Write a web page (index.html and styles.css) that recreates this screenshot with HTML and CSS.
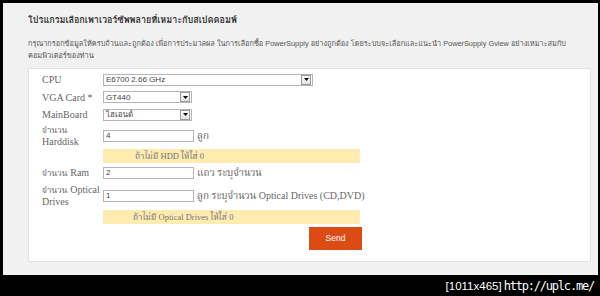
FILE: index.html
```html
<!DOCTYPE html>
<html lang="th">
<head>
<meta charset="utf-8">
<title>PowerSupply</title>
<link rel="stylesheet" href="styles.css">
</head>
<body>
<div class="panel">
  <h1 class="title">โปรแกรมเลือกเพาเวอร์ซัพพลายที่เหมาะกับสเปคคอมพ์</h1>
  <p class="desc">กรุณากรอกข้อมูลให้ครบถ้วนและถูกต้อง เพื่อการประมวลผล ในการเลือกซื้อ PowerSupply อย่างถูกต้อง โดยระบบจะเลือกและแนะนำ PowerSupply Gview อย่างเหมาะสมกับ<br>คอมพิวเตอร์ของท่าน</p>
  <div class="box">
    <div class="row r1">
      <div class="label">CPU</div>
      <div class="select wide"><span class="val">E6700 2.66 GHz</span><span class="arrow"><svg width="5" height="3" viewBox="0 0 5 3"><path d="M0 0H5L2.5 3Z" fill="#000"/></svg></span></div>
    </div>
    <div class="row r1">
      <div class="label">VGA Card *</div>
      <div class="select narrow"><span class="val">GT440</span><span class="arrow"><svg width="5" height="3" viewBox="0 0 5 3"><path d="M0 0H5L2.5 3Z" fill="#000"/></svg></span></div>
    </div>
    <div class="row r1">
      <div class="label">MainBoard</div>
      <div class="select narrow"><span class="val">ไฮเอนด์</span><span class="arrow"><svg width="5" height="3" viewBox="0 0 5 3"><path d="M0 0H5L2.5 3Z" fill="#000"/></svg></span></div>
    </div>
    <div class="row r2">
      <div class="label"><span class="th">จำนวน</span><br>Harddisk</div>
      <div class="input">4</div><span class="unit">ลูก</span>
    </div>
    <div class="note">ถ้าไม่มี HDD ให้ใส่ 0</div>
    <div class="row r3">
      <div class="label"><span class="th">จำนวน</span> Ram</div>
      <div class="input">2</div><span class="unit">แถว ระบุจำนวน</span>
    </div>
    <div class="row r4">
      <div class="label"><span class="th">จำนวน</span> Optical<br>Drives</div>
      <div class="input">1</div><span class="unit">ลูก ระบุจำนวน Optical Drives (CD,DVD)</span>
    </div>
    <div class="note n2">ถ้าไม่มี Optical Drives ให้ใส่ 0</div>
    <div class="actions"><button class="send">Send</button></div>
  </div>
</div>
<div class="footer"><span class="size">[1011x465]</span><span class="url">http://uplc.me/</span></div>
</body>
</html>
```
FILE: styles.css
```css
html, body {
  margin: 0;
  padding: 0;
  background: #000;
  width: 600px;
  height: 296px;
  overflow: hidden;
}
body {
  padding-top: 3px;
  box-sizing: border-box;
}
.panel {
  margin: 0 2px 0 3px;
  height: 272px;
  background: #f1f1f1;
  padding: 0 7px 0 25px;
  box-sizing: border-box;
  overflow: hidden;
}
.title {
  margin: 0;
  padding-top: 11px;
  font: bold 9px/12px "Liberation Sans", "Loma", sans-serif;
  color: #333;
}
.desc {
  margin: 12px 0 0;
  font: 7.35px/12px "Liberation Sans", "Loma", sans-serif;
  color: #555;
  white-space: nowrap;
}
.box {
  margin-top: 6px;
  background: #fff;
  border: 1px solid #e2e2e2;
  height: 194px;
  box-sizing: border-box;
  padding: 2px 0 0 13px;
  font-family: "Liberation Serif", "Noto Serif Thai", serif;
  color: #666;
  font-size: 10px;
}
.row {
  display: flex;
  align-items: center;
  white-space: nowrap;
}
.r1 { height: 17.5px; }
.r2 { height: 24px; }
.r3 { height: 17px; margin-top: 2px; }
.r4 { height: 24px; margin-top: 2px; }
.label {
  width: 61px;
  flex: none;
  line-height: 11.5px;
}
.th {
  font-size: 9px;
}
.select {
  height: 12px;
  border: 1px solid #b4b4b4;
  box-sizing: border-box;
  display: flex;
  align-items: center;
  justify-content: space-between;
  font: 8px "Liberation Sans", "Loma", sans-serif;
  color: #444;
  padding-left: 2px;
}
.select.wide { width: 210px; }
.select.narrow { width: 89px; }
.arrow {
  width: 8px;
  height: 8px;
  border: 1px solid #9a9a9a;
  background: linear-gradient(#fdfdfd, #e2e2e2);
  margin-right: 1px;
  display: flex;
  align-items: center;
  justify-content: center;
}
.input {
  width: 91px;
  height: 12px;
  border: 1px solid #b4b4b4;
  box-sizing: border-box;
  font: 8px/10px "Liberation Sans", sans-serif;
  color: #444;
  padding-left: 2px;
}
.unit {
  margin-left: 3px;
}
.note {
  margin: 1px 0 0 61px;
  width: 257px;
  height: 14px;
  background: #fdebb0;
  font: 8.5px/14px "Liberation Serif", "Noto Serif Thai", serif;
  color: #777;
  padding-left: 32px;
  box-sizing: border-box;
}
.note.n2 { margin-top: 2px; padding-left: 30px; }
.actions {
  margin: 3px 0 0 267px;
}
.send {
  display: block;
  width: 53px;
  height: 23px;
  border: 0;
  background: #dd4b14;
  color: #fff;
  font: 8.5px "Liberation Sans", sans-serif;
  padding: 0;
}
.footer {
  height: 21px;
  display: flex;
  justify-content: flex-end;
  align-items: center;
  padding-right: 6px;
  color: #fff;
  gap: 2px;
}
.size {
  font: 11.5px "Liberation Sans", sans-serif;
}
.url {
  font: 12px "DejaVu Sans Mono", monospace;
  letter-spacing: -1.2px;
}
```
